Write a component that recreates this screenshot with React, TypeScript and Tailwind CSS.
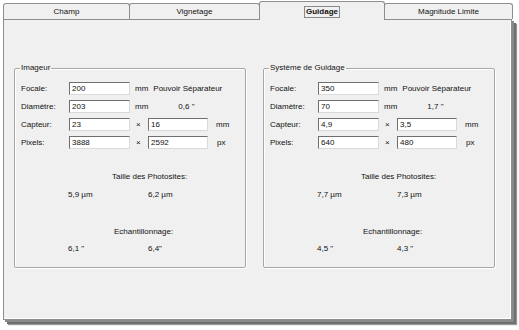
import React from 'react'

type Group = {
  title: string
  focale: string
  diam: string
  sep: string
  cw: string
  ch: string
  pw: string
  ph: string
  sx: string
  sy: string
  ex: string
  ey: string
}

const groups: Group[] = [
  { title: 'Imageur', focale: '200', diam: '203', sep: '0,6 "', cw: '23', ch: '16', pw: '3888', ph: '2592', sx: '5,9 µm', sy: '6,2 µm', ex: '6,1 "', ey: '6,4"' },
  { title: 'Système de Guidage', focale: '350', diam: '70', sep: '1,7 "', cw: '4,9', ch: '3,5', pw: '640', ph: '480', sx: '7,7 µm', sy: '7,3 µm', ex: '4,5 "', ey: '4,3 "' },
]

function Field({ value, w }: { value: string; w: string }) {
  return (
    <div className={`${w} h-[13px] bg-white border border-t-[#6f6f6f] border-l-[#6f6f6f] border-r-[#dadada] border-b-[#dadada] pl-[2px] leading-[11px]`}>
      {value}
    </div>
  )
}

function GroupBox({ g }: { g: Group }) {
  return (
    <fieldset className="w-[232px] h-[205px] border border-[#a8a8a8] rounded-[2px] shadow-[inset_1px_1px_0_#fff,1px_1px_0_#fff]">
      <legend className="ml-[5px] px-[1px] leading-[10px]">{g.title}</legend>
      <div className="pl-[6px] pt-[9px]">
        <div className="grid grid-cols-[48px_61px_18px_60px_auto] auto-rows-[13px] gap-y-[5px] items-center">
          <span>Focale:</span>
          <Field value={g.focale} w="w-[61px]" />
          <span className="col-span-3 pl-[5px] whitespace-nowrap">
            mm<span className="ml-[5px]">Pouvoir Séparateur</span>
          </span>

          <span>Diamètre:</span>
          <Field value={g.diam} w="w-[61px]" />
          <span className="col-span-3 pl-[5px] whitespace-nowrap">
            mm<span className="ml-[30px]">{g.sep}</span>
          </span>

          <span>Capteur:</span>
          <Field value={g.cw} w="w-[61px]" />
          <span className="pl-[6px]">×</span>
          <Field value={g.ch} w="w-[60px]" />
          <span className="pl-[8px]">mm</span>

          <span>Pixels:</span>
          <Field value={g.pw} w="w-[61px]" />
          <span className="pl-[6px]">×</span>
          <Field value={g.ph} w="w-[60px]" />
          <span className="pl-[9px]">px</span>
        </div>

        <div className="mt-[23px] pl-[91px] leading-[10px]">Taille des Photosites:</div>
        <div className="mt-[8px] flex pl-[47px] leading-[10px]">
          <span className="w-[80px]">{g.sx}</span>
          <span>{g.sy}</span>
        </div>

        <div className="mt-[27px] pl-[93px] leading-[10px]">Echantillonnage:</div>
        <div className="mt-[7px] flex pl-[47px] leading-[10px]">
          <span className="w-[80px]">{g.ex}</span>
          <span>{g.ey}</span>
        </div>
      </div>
    </fieldset>
  )
}

const tabs = [
  { label: 'Champ', w: 'w-[127px]' },
  { label: 'Vignetage', w: 'w-[131px]' },
  { label: 'Guidage', w: 'w-[126px]', active: true },
  { label: 'Magnitude Limite', w: 'w-[129px]' },
]

export default function App() {
  return (
    <div className="w-[519px] h-[330px] bg-white pt-px pl-[3px] text-[8px] leading-[10px] text-[#111] font-['Liberation_Sans',Arial,sans-serif] overflow-hidden">
      {/* tab strip */}
      <div className="flex items-end h-[18px] relative z-10">
        {tabs.map((t, i) =>
          t.active ? (
            <div
              key={t.label}
              className={`${t.w} h-[19px] -mb-px -ml-px bg-[#f0f0f0] border border-b-0 border-[#8e8e8e] rounded-t-[3px] flex justify-center pt-[4px]`}
            >
              <span className="h-[12px] px-[1px] border border-[#8a8a8a] font-bold leading-[10px]">{t.label}</span>
            </div>
          ) : (
            <div
              key={t.label}
              className={`${t.w} h-[16px] ${i > 0 ? '-ml-px' : ''} bg-[#f0f0f0] border border-b-0 border-[#8e8e8e] rounded-t-[3px] flex justify-center pt-[3px]`}
            >
              {t.label}
            </div>
          )
        )}
      </div>

      {/* tab body */}
      <div className="w-[509px] h-[301px] border border-[#8e8e8e] bg-[#f0f0f0] shadow-[inset_-1px_-1px_0_#fff,2px_2px_0_#8a8a8a,4px_4px_0_#6e6e6e,5px_5px_1px_#9a9a9a]">
        <div className="pt-[43px] pl-[10px] flex gap-[17px]">
          {groups.map((g) => (
            <GroupBox key={g.title} g={g} />
          ))}
        </div>
      </div>
    </div>
  )
}
